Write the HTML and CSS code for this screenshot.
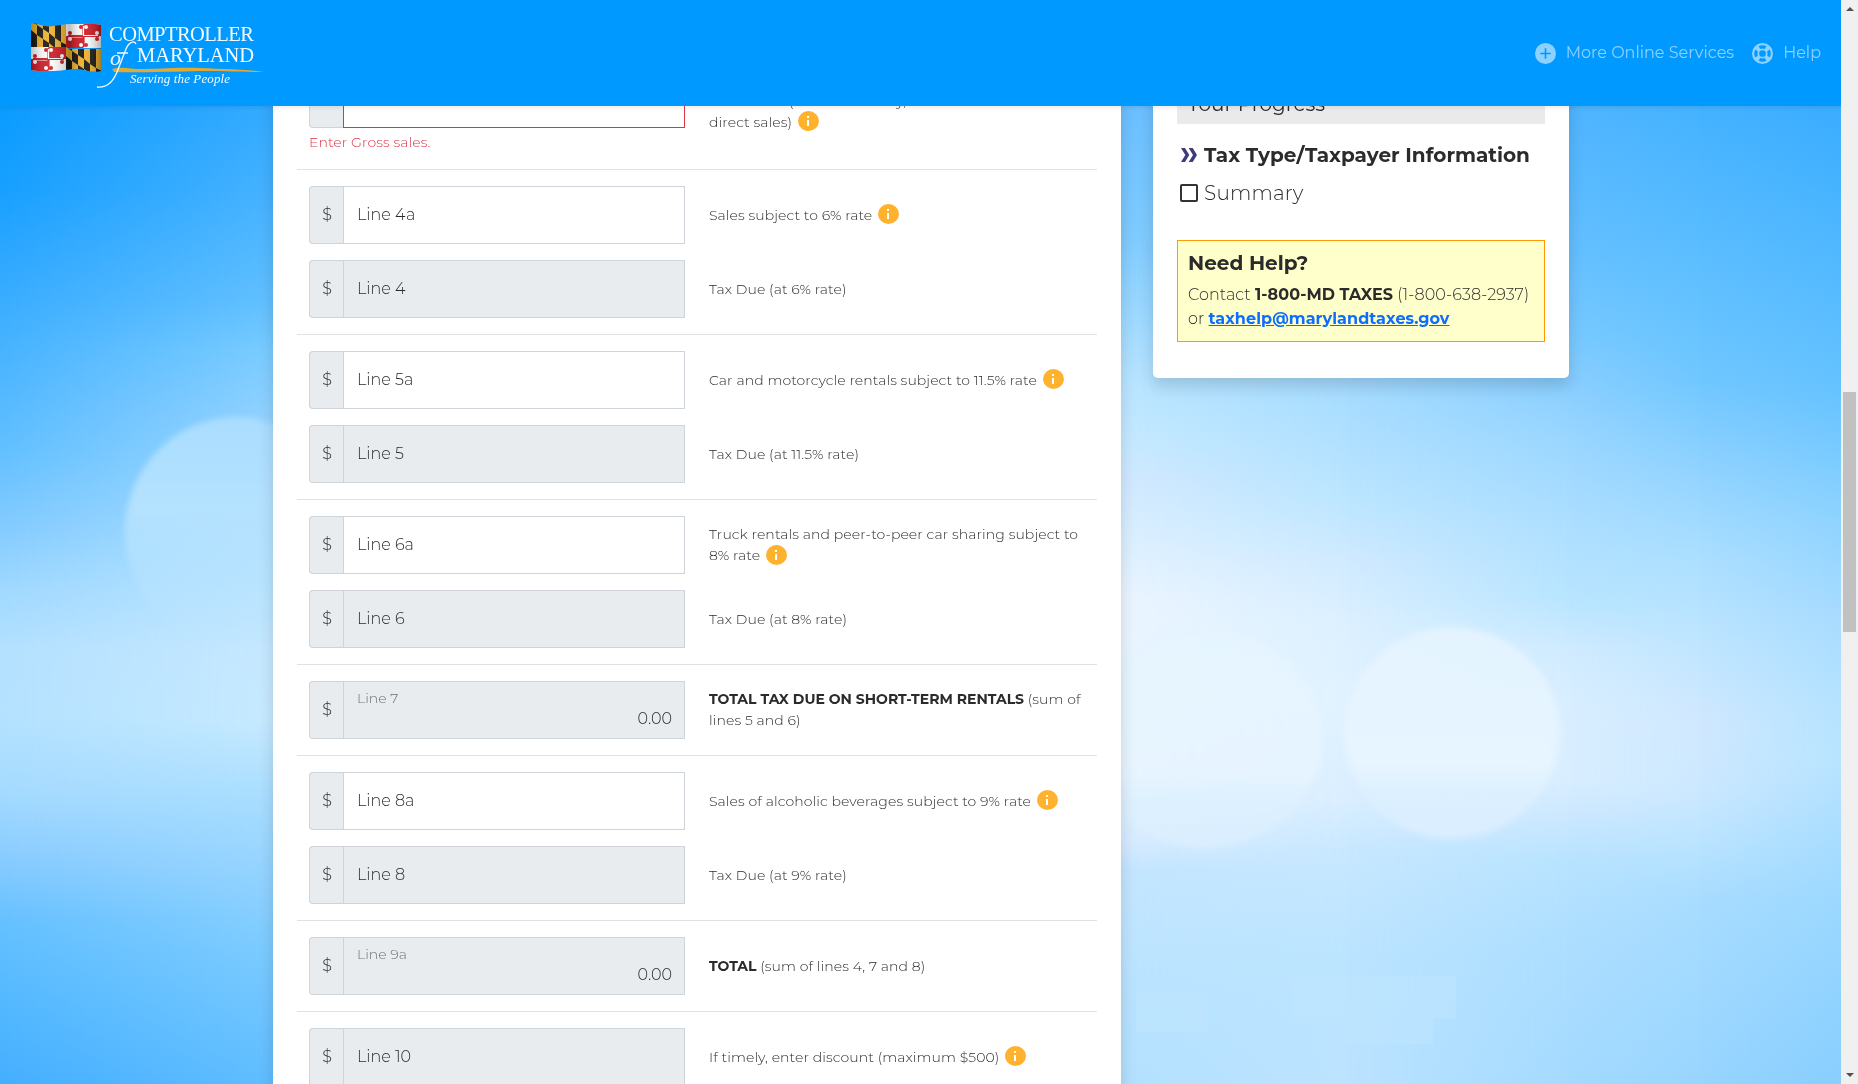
FILE: index.html
```html
<!DOCTYPE html>
<html lang="en">
<head>
<meta charset="utf-8">
<title>Comptroller of Maryland - Sales and Use Tax</title>
<link rel="stylesheet" href="styles.css">
</head>
<body>
<div class="sky" aria-hidden="true">
  <div class="band band-a"></div>
  <div class="band band-b"></div>
  <div class="band band-c"></div>
  <div class="band band-d"></div>
  <div class="band band-e"></div>
  <div class="band band-f"></div>
  <div class="band band-g"></div>
  <svg class="band" viewBox="0 0 1841 1084">
    <defs>
      <linearGradient id="puff" x1="0" y1="0" x2="0" y2="1"><stop offset="0" stop-color="#aaddff"/><stop offset=".4" stop-color="#b4e2ff"/><stop offset="1" stop-color="#c0e7ff" stop-opacity="0"/></linearGradient>
      <linearGradient id="puff2" x1="0" y1="0" x2="0" y2="1"><stop offset="0" stop-color="#e6f4ff"/><stop offset=".65" stop-color="#e8f5ff"/><stop offset=".8" stop-color="#dcf0ff"/><stop offset="1" stop-color="#dcefff"/></linearGradient>
      <filter id="soft" x="-20%" y="-20%" width="140%" height="140%"><feGaussianBlur stdDeviation="3"/></filter>
    </defs>
    <g filter="url(#soft)">
      <ellipse cx="236" cy="532" rx="111" ry="115" fill="url(#puff)"/>
      <ellipse cx="1205" cy="738" rx="118" ry="110" fill="url(#puff2)" opacity=".85"/>
      <ellipse cx="1452" cy="733" rx="108" ry="106" fill="url(#puff2)" opacity=".9"/>
    </g>
    <g fill="#bfe6ff" opacity=".5"><rect x="1136" y="992" width="72" height="40"/><rect x="1290" y="976" width="166" height="42"/><rect x="1343" y="1018" width="90" height="26"/></g>
  </svg>
</div>

<header class="topbar">
  <svg class="logo" width="270" height="106" viewBox="0 0 270 106" role="img" aria-label="Comptroller of Maryland">
    <defs>
      <clipPath id="flag"><path d="M31 23C38 23 44 28 54 26S88 22 101 25V71C91 74 84 68 74 69S44 73 31 70Z"/></clipPath>
      <linearGradient id="fold"><stop offset="0" stop-color="#000" stop-opacity=".25"/><stop offset=".25" stop-color="#fff" stop-opacity=".1"/><stop offset=".55" stop-color="#000" stop-opacity=".25"/><stop offset=".75" stop-color="#fff" stop-opacity=".08"/><stop offset="1" stop-color="#000" stop-opacity=".3"/></linearGradient>
      <g id="calvert">
        <rect width="35" height="24" fill="#eeb02a"/>
        <path d="M0 0H6V24H0ZM12 0H18V24H12ZM24 0H30V24H24Z" fill="#15120c"/>
        <path d="M0-2L6 2V12L0 7ZM12 6L18 10V20L12 16ZM24 15L30 19V26H24Z" fill="#eeb02a"/>
        <path d="M6 2L12 6V16L6 12ZM18 10L24 15V25L18 20ZM30 19L36 22V28L30 25Z" fill="#15120c"/>
      </g>
      <g id="crossland">
        <rect width="35" height="24" fill="#fff"/>
        <path d="M17.500 0H35V12H17.500ZM0 12H17.500V24H0Z" fill="#cf1620"/>
        <path d="M17.500 12H3M17.500 12V22" stroke-width="2.200" class="red-line"/>
        <path d="M17.500 12H32M17.500 12V2" stroke="#fff" stroke-width="2.200"/>
        <path d="M17.500 12H3" stroke="#cf1620" stroke-width="2.200"/>
        <g fill="#cf1620"><circle cx="4" cy="9" r="1.900"/><circle cx="4" cy="12" r="1.900"/><circle cx="15" cy="3" r="1.900"/><circle cx="20" cy="21" r="1.900"/></g>
        <g fill="#fff"><circle cx="31" cy="9" r="1.900"/><circle cx="31" cy="15" r="1.900"/><circle cx="33" cy="12" r="1.900"/><circle cx="20" cy="3" r="1.900"/><circle cx="15" cy="21" r="1.900"/><circle cx="4" cy="15" r="1.900"/></g>
      </g>
      <g id="crossland-flip">
        <rect width="35" height="24" fill="#fff"/>
        <path d="M17.500 0H35V12H17.500ZM0 12H17.500V24H0Z" fill="#cf1620"/>
        <path d="M17.500 12H2" stroke="#fff" stroke-width="1.200" transform="translate(0 1)"/>
        <path d="M17.500 12H2M17.500 12V23M17.500 12V1M17.500 12H33" stroke="#cf1620" stroke-width="2.200"/>
        <path d="M17.500 12V2M17.500 11.500H32" stroke="#fff" stroke-width="1.200"/>
        <g fill="#cf1620"><circle cx="4" cy="9" r="2"/><circle cx="15" cy="3" r="2"/><circle cx="20" cy="21" r="2"/><circle cx="31" cy="15" r="2"/></g>
        <g fill="#fff"><circle cx="4" cy="15" r="2"/><circle cx="15" cy="21" r="2"/><circle cx="20" cy="3" r="2"/><circle cx="31" cy="9" r="2"/></g>
      </g>
    </defs>
    <g clip-path="url(#flag)">
      <use href="#calvert" x="31" y="23"/><use href="#crossland-flip" x="66" y="24"/>
      <use href="#crossland-flip" x="31" y="47"/><use href="#calvert" x="66" y="49"/>
      <rect x="31" y="20" width="70" height="54" fill="url(#fold)"/>
    </g>
    <path d="M112 69C122 66 130 69 142 69S180 67 200 68S245 69 264 72C240 72 225 71 205 71S150 73 114 72Z" fill="#e0aa33"/>
    <g class="logo-text">
      <text x="109" y="41" font-size="20.500" textLength="145" lengthAdjust="spacing">COMPTROLLER</text>
      <text x="137" y="62" font-size="20.500" textLength="117" lengthAdjust="spacing">MARYLAND</text>
      <text x="130" y="83" font-size="13" font-style="italic" textLength="100" lengthAdjust="spacing">Serving the People</text>
      <text x="110" y="65" font-size="22" font-style="italic">o</text>
      <path d="M136 44C134 40 129 42 126 49L117 72C113 82 106 88 97 87M117 53H128" fill="none" stroke="#f4faff" stroke-width="1.300"/>
    </g>
  </svg>
  <nav class="nav">
    <a class="nav-link"><svg width="21" height="21" viewBox="0 0 20 20"><path fill-rule="evenodd" fill="currentColor" d="M10 0a10 10 0 1 0 0 20a10 10 0 0 0 0-20ZM9.200 5h1.600v4.200H15v1.600h-4.200V15H9.200v-4.200H5V9.200h4.200Z"/></svg><span>More Online Services</span></a>
    <a class="nav-link help"><svg width="21" height="21" viewBox="0 0 20 20"><path fill="currentColor" fill-rule="evenodd" d="M10 0a10 10 0 1 0 0 20a10 10 0 0 0 0-20ZM10 6.800a3.200 3.200 0 1 1 0 6.400a3.200 3.200 0 0 1 0-6.400ZM6.200 3.200A7.800 7.800 0 0 1 13.800 3.200L12 5.600A5 5 0 0 0 8 5.600ZM16.800 6.200A7.800 7.800 0 0 1 16.800 13.800L14.400 12A5 5 0 0 0 14.400 8ZM13.800 16.800A7.800 7.800 0 0 1 6.200 16.800L8 14.400A5 5 0 0 0 12 14.400ZM3.200 13.800A7.800 7.800 0 0 1 3.200 6.200L5.600 8A5 5 0 0 0 5.600 12Z"/></svg><span>Help</span></a>
  </nav>
</header>

<main class="columns">
  <section class="card form">
    <div class="group">
      <div class="line">
        <div class="entry">
          <div class="field invalid"><span class="addon">$</span><div class="input"><svg class="alert" width="18" height="18" viewBox="0 0 18 18"><circle cx="9" cy="9" r="8" fill="none" stroke="#dc3545" stroke-width="1.300"/><path d="M9 5v5M9 12v1.500" stroke="#dc3545" stroke-width="1.500"/></svg></div></div>
          <div class="error">Enter Gross sales.</div>
        </div>
        <p class="label">Gross sales (include delivery, online and<br>direct sales) <i class="info"></i></p>
      </div>
    </div>
    <div class="group">
      <div class="line"><div class="field"><span class="addon">$</span><div class="input">Line 4a</div></div><p class="label">Sales subject to 6% rate <i class="info"></i></p></div>
      <div class="line"><div class="field off"><span class="addon">$</span><div class="input">Line 4</div></div><p class="label">Tax Due (at 6% rate)</p></div>
    </div>
    <div class="group">
      <div class="line"><div class="field"><span class="addon">$</span><div class="input">Line 5a</div></div><p class="label">Car and motorcycle rentals subject to 11.5% rate <i class="info"></i></p></div>
      <div class="line"><div class="field off"><span class="addon">$</span><div class="input">Line 5</div></div><p class="label">Tax Due (at 11.5% rate)</p></div>
    </div>
    <div class="group">
      <div class="line"><div class="field"><span class="addon">$</span><div class="input">Line 6a</div></div><p class="label">Truck rentals and peer-to-peer car sharing subject to<br>8% rate <i class="info"></i></p></div>
      <div class="line"><div class="field off"><span class="addon">$</span><div class="input">Line 6</div></div><p class="label">Tax Due (at 8% rate)</p></div>
    </div>
    <div class="group">
      <div class="line"><div class="field off"><span class="addon">$</span><div class="input filled"><small>Line 7</small><span>0.00</span></div></div><p class="label"><b>TOTAL TAX DUE ON SHORT-TERM RENTALS</b> (sum of<br>lines 5 and 6)</p></div>
    </div>
    <div class="group">
      <div class="line"><div class="field"><span class="addon">$</span><div class="input">Line 8a</div></div><p class="label">Sales of alcoholic beverages subject to 9% rate <i class="info"></i></p></div>
      <div class="line"><div class="field off"><span class="addon">$</span><div class="input">Line 8</div></div><p class="label">Tax Due (at 9% rate)</p></div>
    </div>
    <div class="group">
      <div class="line"><div class="field off"><span class="addon">$</span><div class="input filled"><small>Line 9a</small><span>0.00</span></div></div><p class="label"><b>TOTAL</b> (sum of lines 4, 7 and 8)</p></div>
    </div>
    <div class="group">
      <div class="line"><div class="field off"><span class="addon">$</span><div class="input">Line 10</div></div><p class="label">If timely, enter discount (maximum $500) <i class="info"></i></p></div>
    </div>
  </section>

  <aside class="card side">
    <h2 class="progress">Your Progress</h2>
    <ul class="steps">
      <li class="current"><svg width="18" height="18" viewBox="0 0 18 18"><path d="M1 2h4l4.300 7L5 16H1l4.300-7ZM8.700 2h4L17 9l-4.300 7h-4l4.300-7Z" fill="#3f3d78"/></svg><span>Tax Type/Taxpayer Information</span></li>
      <li><svg width="18" height="18" viewBox="0 0 18 18"><rect x="1" y="1" width="16" height="16" rx="1" fill="none" stroke="#333" stroke-width="2"/></svg><span>Summary</span></li>
    </ul>
    <div class="need-help">
      <h3>Need Help?</h3>
      <p>Contact <b>1-800-MD TAXES</b> (1-800-638-2937)<br>or <a>taxhelp@marylandtaxes.gov</a></p>
    </div>
  </aside>
</main>

<div class="scrollbar"><i class="arrow up"></i><div class="thumb"></div><i class="arrow down"></i></div>
</body>
</html>
```
FILE: styles.css
```css
* { box-sizing: border-box; }
body {
  margin: 0;
  width: 1858px;
  height: 1084px;
  overflow: hidden;
  position: relative;
  background: #62bfff;
  color: #2b2b2b;
  font: 300 16px/24px Montserrat, Inter, sans-serif;
}
p, h2, h3, ul { margin: 0; padding: 0; }
b { font-weight: 700; }

/* Sky: vertical colour ramps that cross-fade from left to right */
.sky { position: absolute; inset: 0 17px 0 0; }
.band { position: absolute; inset: 0; width: 1841px; height: 1084px; }
.band-a { background: linear-gradient(#0a9cff 106px, #18a0ff 190px, #2ea8ff 260px, #45b2ff 340px, #62c0ff 450px, #84ccff 530px, #a0d9ff 590px, #b4e1ff 650px, #b4e2ff 715px, #a6dbff 790px, #88ccff 860px, #66c1ff 920px, #54b9ff 1000px, #45afff 1084px); }
.band-b { background: linear-gradient(#34aaff 106px, #48b3ff 200px, #62c0ff 300px, #7accff 350px, #92d2ff 415px, #a4daff 500px, #b4e2ff 560px, #c6e8ff 650px, #c6eaff 720px, #a8ddff 800px, #98d5ff 860px, #7ccbff 950px, #60bdff 1084px); mask-image: linear-gradient(to right, transparent 0, #000 273px); }
.band-c { background: linear-gradient(#6cc0ff 106px, #80ccff 240px, #b8e5ff 380px, #c6eaff 440px, #d2e9ff 480px, #dcf0ff 540px, #ebf5ff 600px, #eaf6ff 700px, #e4f3ff 780px, #d8ecff 840px, #c4e6ff 870px, #bfe5ff 930px, #b8e3ff 1000px, #b4e1ff 1084px); mask-image: linear-gradient(to right, transparent 300px, #000 1121px); }
.band-d { background: linear-gradient(#62bdff 106px, #a4dbff 380px, #b0e0ff 440px, #bce6ff 500px, #d0eaff 560px, #dcf0ff 620px, #e0f2ff 700px, #daeeff 800px, #c8e8ff 850px, #c2e6ff 900px, #bbe4ff 960px, #bce3ff 1084px); mask-image: linear-gradient(to right, transparent 1121px, #000 1345px); }
.band-e { background: linear-gradient(#50b5ff 106px, #64c0ff 250px, #78caff 340px, #88ceff 380px, #9ad6ff 440px, #acdeff 520px, #b8e5ff 600px, #d0ebff 650px, #d8eeff 700px, #d8eeff 780px, #cce8ff 815px, #b8e3ff 860px, #addeff 940px, #a4daff 1084px); mask-image: linear-gradient(to right, transparent 1345px, #000 1569px); }
.band-f { background: linear-gradient(#44b2ff 106px, #70c7ff 380px, #94d4ff 480px, #acdfff 560px, #c0e6ff 650px, #d0e8ff 720px, #cce8ff 790px, #bbe4ff 840px, #a8dcff 900px, #98d5ff 1084px); mask-image: linear-gradient(to right, transparent 1569px, #000 1700px); }
.band-g { background: linear-gradient(#3aacff 106px, #50b8ff 250px, #66c2ff 390px, #78caff 450px, #8ed3ff 520px, #a8dbff 620px, #b4e2ff 700px, #b8e4ff 760px, #acdeff 820px, #9cd8ff 900px, #90d2ff 1000px, #88ceff 1084px); mask-image: linear-gradient(to right, transparent 1700px, #000 1841px); }

.topbar {
  position: relative;
  z-index: 2;
  width: 1841px;
  height: 106px;
  display: flex;
  justify-content: space-between;
  background: #09f;
  box-shadow: 0 2px 4px rgba(0, 0, 0, .075);
}
.logo-text { fill: #f4faff; font-family: "Liberation Serif", serif; }
.red-line { stroke: #cf1620; }
.nav { display: flex; align-items: center; padding-right: 20px; }
.nav-link { display: flex; align-items: center; gap: 10px; color: rgba(255, 255, 255, .55); font-weight: 400; white-space: nowrap; }
.nav-link.help { margin-left: 18px; }

.columns { position: relative; display: flex; align-items: flex-start; gap: 32px; margin-top: -53px; padding-left: 273px; }
.card { background: #fff; border-radius: 5px; box-shadow: 0 8px 16px rgba(0, 0, 0, .15); }

.form { width: 848px; padding: 0 24px; }
.group { border-top: 1px solid #dee2e6; padding: 16px 0; display: grid; gap: 16px; }
.line { display: grid; grid-template-columns: 376px 376px; gap: 24px; padding: 0 12px; align-items: center; }
.field { display: flex; height: 58px; }
.addon {
  width: 35px;
  display: grid;
  place-items: center;
  background: #e9ecef;
  border: 1px solid #ced4da;
  border-right: 0;
  border-radius: 4px 0 0 4px;
}
.input { flex: 1; margin-left: -1px; border: 1px solid #ced4da; padding: 0 12px 0 13px; display: flex; align-items: center; background: #fff; }
.off .input { background: #e9ecef; }
.invalid .input { border-color: #dc3545; justify-content: flex-end; padding: 0 10px 8px; }
.input.filled { display: block; }
.filled small, .filled span { display: block; }
.filled small { font-size: 14px; line-height: 18px; padding-top: 7px; opacity: .65; }
.filled span { text-align: right; line-height: 24px; }
.error { margin-top: 4px; font-size: 14px; line-height: 21px; color: #dc3545; letter-spacing: .09px; }
.label { font-size: 14px; line-height: 21px; white-space: nowrap; letter-spacing: .09px; }
.label b { letter-spacing: 0; }
.info {
  display: inline-block;
  width: 21px;
  height: 20px;
  margin: -3px 0 0 2px;
  vertical-align: middle;
  border-radius: 50%;
  background:
    linear-gradient(#fff, #fff) 9px 5px / 2px 2px no-repeat,
    linear-gradient(#fff, #fff) 9px 9px / 2px 6px no-repeat,
    #ffb22e;
}

.side { width: 416px; height: 325px; padding: 31px 24px 0; }
.progress { height: 40px; padding: 0 10px; background: #eaeaea; font-size: 20px; line-height: 41px; font-weight: 400; }
.steps { list-style: none; padding: 12px 0 0 3px; }
.steps li { display: flex; align-items: center; gap: 6px; height: 38px; font-size: 20px; letter-spacing: .2px; white-space: nowrap; }
.steps .current { font-weight: 700; letter-spacing: 0; }
.need-help { margin-top: 28px; height: 102px; padding: 8px 10px; border: 1px solid #f90; background: #ffc; white-space: nowrap; }
.need-help h3 { font-size: 20px; line-height: 28px; font-weight: 700; padding-bottom: 6px; }
.need-help p { letter-spacing: .07px; }
.need-help a { color: #0d6efd; font-weight: 700; text-decoration: underline; }

.scrollbar { position: absolute; z-index: 3; right: 0; top: 0; width: 17px; height: 1084px; background: #f0f0f0; display: flex; flex-direction: column; align-items: center; justify-content: space-between; padding: 7px 0; }
.thumb { width: 13px; height: 240px; margin-top: -60px; background: #c1c1c1; }
.arrow { border: 4px solid transparent; width: 0; height: 0; }
.up { border-top: 0; border-bottom-color: #505050; }
.down { border-bottom: 0; border-top-color: #505050; }
```
